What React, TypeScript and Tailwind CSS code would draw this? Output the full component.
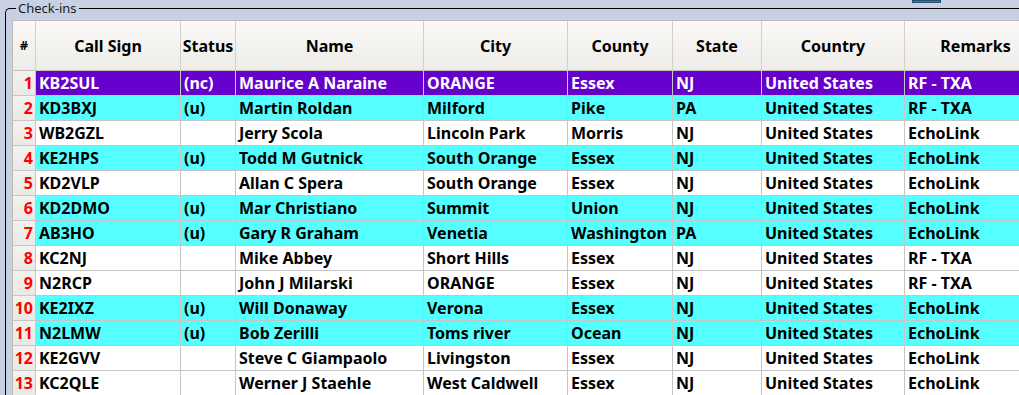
type Row = {
  call: string
  status: string
  name: string
  city: string
  county: string
  state: string
  country: string
  remarks: string
  tone: 'sel' | 'cyan' | 'white'
}

const ROWS: Row[] = [
  { call: 'KB2SUL', status: '(nc)', name: 'Maurice A Naraine', city: 'ORANGE', county: 'Essex', state: 'NJ', country: 'United States', remarks: 'RF - TXA', tone: 'sel' },
  { call: 'KD3BXJ', status: '(u)', name: 'Martin Roldan', city: 'Milford', county: 'Pike', state: 'PA', country: 'United States', remarks: 'RF - TXA', tone: 'cyan' },
  { call: 'WB2GZL', status: '', name: 'Jerry Scola', city: 'Lincoln Park', county: 'Morris', state: 'NJ', country: 'United States', remarks: 'EchoLink', tone: 'white' },
  { call: 'KE2HPS', status: '(u)', name: 'Todd M Gutnick', city: 'South Orange', county: 'Essex', state: 'NJ', country: 'United States', remarks: 'EchoLink', tone: 'cyan' },
  { call: 'KD2VLP', status: '', name: 'Allan C Spera', city: 'South Orange', county: 'Essex', state: 'NJ', country: 'United States', remarks: 'EchoLink', tone: 'white' },
  { call: 'KD2DMO', status: '(u)', name: 'Mar Christiano', city: 'Summit', county: 'Union', state: 'NJ', country: 'United States', remarks: 'EchoLink', tone: 'cyan' },
  { call: 'AB3HO', status: '(u)', name: 'Gary R Graham', city: 'Venetia', county: 'Washington', state: 'PA', country: 'United States', remarks: 'EchoLink', tone: 'cyan' },
  { call: 'KC2NJ', status: '', name: 'Mike Abbey', city: 'Short Hills', county: 'Essex', state: 'NJ', country: 'United States', remarks: 'RF - TXA', tone: 'white' },
  { call: 'N2RCP', status: '', name: 'John J Milarski', city: 'ORANGE', county: 'Essex', state: 'NJ', country: 'United States', remarks: 'RF - TXA', tone: 'white' },
  { call: 'KE2IXZ', status: '(u)', name: 'Will Donaway', city: 'Verona', county: 'Essex', state: 'NJ', country: 'United States', remarks: 'EchoLink', tone: 'cyan' },
  { call: 'N2LMW', status: '(u)', name: 'Bob Zerilli', city: 'Toms river', county: 'Ocean', state: 'NJ', country: 'United States', remarks: 'EchoLink', tone: 'cyan' },
  { call: 'KE2GVV', status: '', name: 'Steve C Giampaolo', city: 'Livingston', county: 'Essex', state: 'NJ', country: 'United States', remarks: 'EchoLink', tone: 'white' },
  { call: 'KC2QLE', status: '', name: 'Werner J Staehle', city: 'West Caldwell', county: 'Essex', state: 'NJ', country: 'United States', remarks: 'EchoLink', tone: 'white' },
]

// column widths incl. right grid line
const COLS = [
  { key: 'call', label: 'Call Sign', w: 'w-[145px]' },
  { key: 'status', label: 'Status', w: 'w-[55px]' },
  { key: 'name', label: 'Name', w: 'w-[188px]' },
  { key: 'city', label: 'City', w: 'w-[144px]' },
  { key: 'county', label: 'County', w: 'w-[105px]' },
  { key: 'state', label: 'State', w: 'w-[89px]' },
  { key: 'country', label: 'Country', w: 'w-[143px]' },
  { key: 'remarks', label: 'Remarks', w: 'w-[142px]' },
] as const

const toneClass = {
  sel: 'bg-[#6600cc] text-white',
  cyan: 'bg-[#55ffff] text-black',
  white: 'bg-white text-black',
}

export default function App() {
  return (
    <div className="relative w-[1019px] h-[395px] overflow-hidden bg-[#c8d1e3] font-['Noto_Sans',sans-serif]">
      {/* bit of a button peeking in from above */}
      <div className="absolute left-[912px] top-0 w-[29px] h-[3px] bg-[#3f7aa0] border border-[#23506e]" />

      <fieldset className="ml-[5px] pl-[6px] pt-[3px] border border-r-0 border-b-0 border-black rounded-tl-[5px] min-w-0">
        <legend className="ml-[4px] px-[2px] text-[13px] leading-[17px] text-[#1a1a1a]">Check-ins</legend>

        <div className="w-[1100px] border-l border-t border-[#bdbab6]">
          {/* Header */}
          <div className="flex h-[50px] border-b border-[#c4c1bd] bg-gradient-to-b from-[#fbf9f7] to-[#eeece9]">
            <div className="w-[23px] shrink-0 border-r border-[#d3d0cc] flex items-center justify-center text-[13px] font-bold text-black">#</div>
            {COLS.map(c => (
              <div
                key={c.key}
                className={`${c.w} shrink-0 border-r border-[#d3d0cc] flex items-center justify-center text-[16px] font-bold text-black`}
              >
                {c.label}
              </div>
            ))}
          </div>

          {/* Rows */}
          {ROWS.map((r, i) => (
            <div key={r.call} className="flex h-[25px] border-b border-[#c6c6c6]">
              <div className="w-[23px] shrink-0 border-r border-[#c6c6c6] bg-gradient-to-b from-[#f4f2ef] to-[#ebe9e6] flex items-center justify-end pr-[2px] text-[16px] font-bold text-[#ff0000] leading-none">
                {i + 1}
              </div>
              {COLS.map(c => (
                <div
                  key={c.key}
                  className={`${c.w} shrink-0 border-r border-[#c6c6c6] ${toneClass[r.tone]} flex items-center pl-[3px] text-[16px] font-bold leading-none whitespace-nowrap overflow-hidden`}
                >
                  {r[c.key]}
                </div>
              ))}
            </div>
          ))}
        </div>
      </fieldset>
    </div>
  )
}
